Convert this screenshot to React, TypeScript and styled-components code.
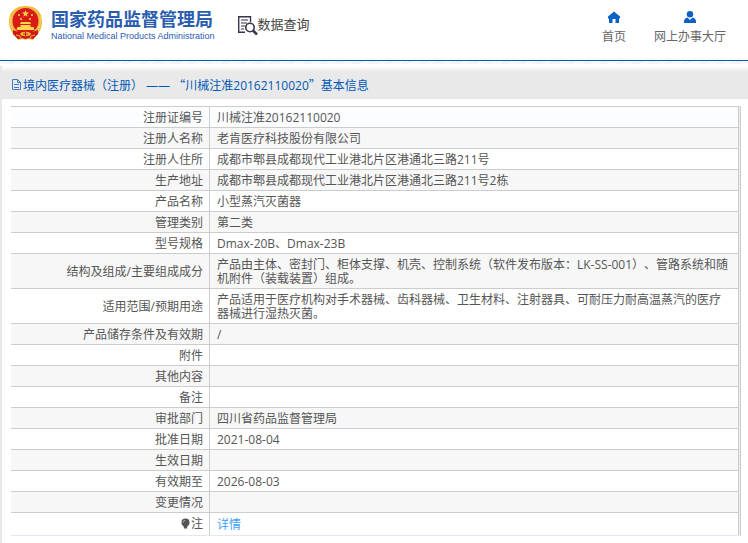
import React from "react";
import styled, { createGlobalStyle } from "styled-components";

const GlobalStyle = createGlobalStyle`
  * { box-sizing: border-box; }
  body {
    margin: 0;
    background: #fff;
    color: #555;
    font: 12px/14px "Open Sans", "Noto Sans CJK SC", sans-serif;
    text-spacing-trim: space-all;
  }
  a { text-decoration: none; }
`;

const Header = styled.header`
  display: flex;
  align-items: flex-start;
  height: 61px;
  padding: 0 22px 0 8px;
  border-bottom: 1px solid #0058b8;
`;

const Brand = styled.a`
  display: flex;
  gap: 8px;
  padding-top: 5px;
  color: #2a5caf;
`;

const BrandText = styled.span`
  display: flex;
  flex-direction: column;
  padding-top: 3px;
`;

const BrandName = styled.strong`
  font: 700 18px/20px "Noto Sans CJK SC", sans-serif;
`;

const BrandLatin = styled.span`
  font: 9px/16px "Liberation Sans", sans-serif;
`;

const Section = styled.a`
  display: flex;
  align-items: flex-start;
  margin: 15px auto 0 22px;
  color: #444;
  font: 13px/18px "Noto Sans CJK SC", sans-serif;
`;

const Nav = styled.nav`
  display: flex;
  gap: 28px;
  padding-top: 10px;
`;

const NavLink = styled.a`
  display: flex;
  flex-direction: column;
  align-items: center;
  gap: 6px;
  color: #666;
`;

const Hatch = styled.div`
  height: 3px;
  background: repeating-linear-gradient(135deg, #fff 0 1px, #eeecec 1px 2px);
`;

const Panel = styled.main`
  border-left: 2px solid #e9e9e9;
  margin-top: 2px;
  padding-bottom: 7px;
`;

const TitleBar = styled.h1`
  display: flex;
  align-items: center;
  height: 33px;
  margin: 0;
  padding: 6px 10px 0 9px;
  background: linear-gradient(#fff, #e9e9e9 6px);
  border-bottom: 1px solid #e6e6ef;
  color: #0058b8;
  font-size: 12px;
  font-weight: 400;
  white-space: pre;
`;

const WideQuote = styled.span`
  font-family: "Noto Sans CJK SC", sans-serif;
`;

const TableFrame = styled.div`
  margin: 7px 7px 0 9px;
  padding-right: 1px;
  border-right: 1px solid #ccc;
  background: #ededf2;
`;

const Table = styled.table`
  width: 100%;
  table-layout: fixed;
  border-spacing: 0;
  border-bottom: 1px solid #e6e6ef;
  background: #fff;
`;

const Row = styled.tr`
  &:nth-child(even) { background: #f7f7f7; }
  &:first-child { background: #fbfdff; }
  &:last-child > * { height: 23px; }
`;

const Label = styled.th`
  width: 198px;
  padding: 4px 6px 2px;
  border-top: 1px solid #ccc;
  font-weight: 400;
  text-align: right;
`;

const Value = styled.td`
  padding: 4px 8px 2px 7px;
  border: solid #ccc;
  border-width: 1px 1px 0;
`;

const DetailLink = styled.a`
  color: #409eff;
`;

const NoteLabel = styled.span`
  display: inline-flex;
  align-items: center;
`;

const Emblem = () => (
  <svg width="35" height="37" viewBox="0 0 35 37" aria-hidden="true">
    <path d="M17.500 1C7 1 1 7 1 16.500c0 7 3 12 7 15.500l2 3 5-1 2.500 1 2.500-1 5 1 2-3c4-3.500 7-8.500 7-15.500C34 7 28 1 17.500 1Z" fill="#efb93d" />
    <circle cx="17.500" cy="16" r="13" fill="#da1a18" />
    <path d="M3 12c-1 8 1 14 7 19M32 12c1 8-1 14-7 19" fill="none" stroke="#ffe17b" strokeWidth="1" strokeDasharray="2 1" />
    <path d="m17.500 5 .9 2.600h2.700l-2.200 1.600.8 2.600-2.200-1.600-2.200 1.600.8-2.600-2.200-1.600h2.700Z" fill="#ffd947" />
    <g fill="#ffd947">
      <circle cx="11" cy="10" r="1" /><circle cx="24" cy="10" r="1" />
      <circle cx="13" cy="14" r="1" /><circle cx="22" cy="14" r="1" />
      <path d="M13 17h9l1 2H12ZM12.500 20h10v2h3l1 3H8.500l1-3h3Z" />
    </g>
    <path d="M5 25c6 3 19 3 25 0v4l-5 5-4-1-3.500 1-3.500-1-4 1-5-5Z" fill="#cf1717" />
    <path d="M12 29c1-3 10-3 11 0-1 3-10 3-11 0Z" fill="#f1bd3c" />
    <path d="M15 29h5M17.500 27v4" stroke="#cf1717" strokeWidth="1" />
    <path d="m8 30 4 1 1 2M27 30l-4 1-1 2" fill="none" stroke="#f1bd3c" />
  </svg>
);

const SearchDocument = () => (
  <svg width="21" height="21" viewBox="0 0 21 21" fill="none" stroke="#35354b" aria-hidden="true">
    <path d="M13.500 7V1.700H1.700v15.600H8" strokeWidth="1.400" />
    <path d="M4 5h7M4 8h6M4 11h4M4 14h3" />
    <circle cx="13" cy="12.500" r="4.200" strokeWidth="1.600" fill="#fff" />
    <path d="m16 15.500 4 4" strokeWidth="2.600" />
  </svg>
);

const HomeIcon = () => (
  <svg width="14" height="14" viewBox="0 0 14 14" fill="#0b62c4" aria-hidden="true">
    <path d="M7 1.500 1 6.500v2h1V13h3.500V9h3v4H12V8.500h1v-2Z" />
  </svg>
);

const UserIcon = () => (
  <svg width="14" height="14" viewBox="0 0 14 14" fill="#0b62c4" aria-hidden="true">
    <circle cx="7" cy="4.200" r="3.200" />
    <path d="M1 13v-1.500C1 9 2.500 8 4.500 7.500L7 10l2.500-2.500C11.500 8 13 9 13 11.500V13Z" />
  </svg>
);

const FileIcon = () => (
  <svg width="12" height="12" viewBox="0 0 12 12" fill="none" stroke="#3f7bc9" aria-hidden="true">
    <path d="M1.500.5h5l3 3v7h-8ZM6.500.5v3h3M3 5.500h5M3 8.500h5" />
  </svg>
);

const BulbIcon = () => (
  <svg width="11" height="12" viewBox="0 0 11 12" aria-hidden="true">
    <circle cx="5.500" cy="4.500" r="4" fill="#555" />
    <path d="M3.500 7.500h4L7 10.500H4Z" fill="#555" />
    <path d="M3.200 4.500c0-1.200.8-2 2-2" stroke="#ddd" strokeWidth=".8" fill="none" />
  </svg>
);

const records: [string, string][] = [
  ["注册证编号", "川械注准20162110020"],
  ["注册人名称", "老肯医疗科技股份有限公司"],
  ["注册人住所", "成都市郫县成都现代工业港北片区港通北三路211号"],
  ["生产地址", "成都市郫县成都现代工业港北片区港通北三路211号2栋"],
  ["产品名称", "小型蒸汽灭菌器"],
  ["管理类别", "第二类"],
  ["型号规格", "Dmax-20B、Dmax-23B"],
  ["结构及组成/主要组成成分", "产品由主体、密封门、柜体支撑、机壳、控制系统（软件发布版本：LK-SS-001）、管路系统和随机附件（装载装置）组成。"],
  ["适用范围/预期用途", "产品适用于医疗机构对手术器械、齿科器械、卫生材料、注射器具、可耐压力耐高温蒸汽的医疗器械进行湿热灭菌。"],
  ["产品储存条件及有效期", "/"],
  ["附件", ""],
  ["其他内容", ""],
  ["备注", ""],
  ["审批部门", "四川省药品监督管理局"],
  ["批准日期", "2021-08-04"],
  ["生效日期", ""],
  ["有效期至", "2026-08-03"],
  ["变更情况", ""],
];

export default function App() {
  return (
    <div lang="zh-CN">
      <GlobalStyle />
      <Header>
        <Brand href="#home">
          <Emblem />
          <BrandText>
            <BrandName>国家药品监督管理局</BrandName>
            <BrandLatin>National Medical Products Administration</BrandLatin>
          </BrandText>
        </Brand>
        <Section href="#search">
          <SearchDocument />
          数据查询
        </Section>
        <Nav>
          <NavLink href="#home"><HomeIcon />首页</NavLink>
          <NavLink href="#services"><UserIcon />网上办事大厅</NavLink>
        </Nav>
      </Header>
      <Hatch />
      <Panel>
        <TitleBar>
          <FileIcon />
          <span>
            境内医疗器械（注册） —— <WideQuote>“</WideQuote>川械注准20162110020<WideQuote>”</WideQuote>基本信息
          </span>
        </TitleBar>
        <TableFrame>
          <Table>
            <tbody>
              {records.map(([label, value]) => (
                <Row key={label}>
                  <Label scope="row">{label}</Label>
                  <Value>{value}</Value>
                </Row>
              ))}
              <Row>
                <Label scope="row"><NoteLabel><BulbIcon />注</NoteLabel></Label>
                <Value><DetailLink href="#detail">详情</DetailLink></Value>
              </Row>
            </tbody>
          </Table>
        </TableFrame>
      </Panel>
    </div>
  );
}
